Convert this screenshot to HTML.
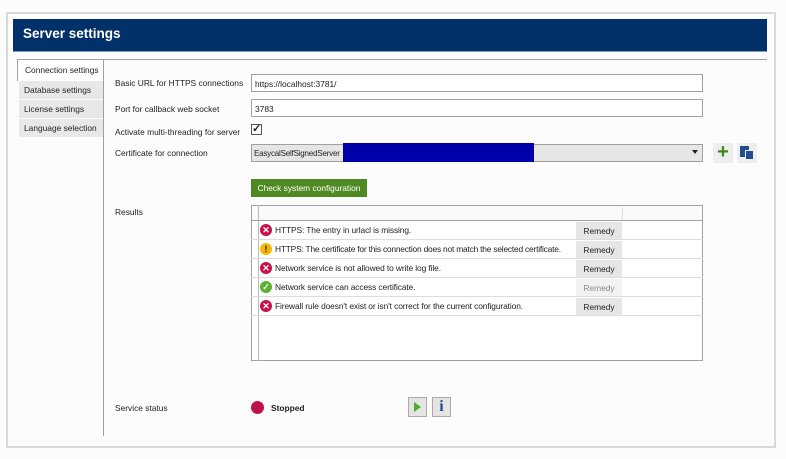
<!DOCTYPE html>
<html><head><style>
body{margin:0;width:786px;height:459px;background:#fcfcfc;font-family:"Liberation Sans",sans-serif;font-size:8.4px;color:#222;position:relative;overflow:hidden}
div,span{position:absolute;box-sizing:border-box;white-space:nowrap}
.frame{left:6px;top:12px;width:770px;height:436px;border:2px solid #d9d9d9;background:#fcfcfc}
.hdr{left:13px;top:19px;width:754px;height:33px;background:#023169;border-bottom:1px solid #7f98b8;color:#fff;font-size:13.5px;font-weight:bold;padding:7px 0 0 10px}
.tab{left:19px;width:84px;height:18px;background:#e8e8e8;padding:4px 0 0 5px}
.lbl{left:115px}
.inp{left:251px;width:452px;height:18px;border:1px solid #a0a0a0;background:#fff;padding:4px 0 0 3px}
.row{left:251px;width:452px;height:19px;border-bottom:1px solid #ddd}
.ic{left:9px;top:3px;width:12px;height:12px;border-radius:50%;color:#fff;font-size:9px;font-weight:bold;text-align:center;line-height:12px}
.rt{left:24px;top:4px;letter-spacing:-0.1px}
.rem{left:325px;top:1px;width:46px;height:17px;background:#e6e6e6;text-align:center;padding-top:4px}
</style></head><body>
<div class="frame"></div>
<div class="hdr">Server settings</div>
<div style="left:17px;top:59px;width:750px;height:1px;background:#a0a0a0"></div>
<div style="left:17px;top:60px;width:87px;height:21px;background:#fff;border:1px solid #a0a0a0;border-top:none;border-bottom:none;padding:5px 0 0 7px">Connection settings</div>
<div class="tab" style="top:81px">Database settings</div>
<div class="tab" style="top:100px">License settings</div>
<div class="tab" style="top:119px">Language selection</div>
<div style="left:103px;top:80px;width:1px;height:356px;background:#a0a0a0"></div>
<div class="lbl" style="top:78px">Basic URL for HTTPS connections</div>
<div class="inp" style="top:74px">https://localhost:3781/</div>
<div class="lbl" style="top:104px">Port for callback web socket</div>
<div class="inp" style="top:99px">3783</div>
<div class="lbl" style="top:127px">Activate multi-threading for server</div>
<div style="left:251px;top:124px;width:11px;height:11px;border:1px solid #555;background:#fff;font-size:11px;line-height:9px;text-align:center;font-weight:bold">✓</div>
<div class="lbl" style="top:148px">Certificate for connection</div>
<div class="inp" style="top:144px;height:18px;background:#e6e6e6;padding-top:4px;padding-left:2px;font-size:8px;letter-spacing:-0.2px">EasycalSelfSignedServer</div>
<div style="left:343px;top:143px;width:191px;height:19px;background:#0000a8"></div>
<div style="left:692px;top:150px;border:3px solid transparent;border-top:4px solid #222"></div>
<div style="left:713px;top:143px;width:20px;height:20px;background:#eee;color:#3a8a1a;font-size:20px;font-weight:bold;text-align:center;line-height:19px">+</div>
<div style="left:737px;top:143px;width:20px;height:20px;background:#eee"><span style="left:3px;top:3px;width:9px;height:11px;background:#1f4e8a"></span><span style="left:8px;top:7px;width:9px;height:10px;background:#1f4e8a;border:1px solid #eee"></span></div>
<div style="left:251px;top:179px;width:116px;height:18px;background:#4e8a21;color:#fff;text-align:center;padding-top:4px">Check system configuration</div>
<div class="lbl" style="top:207px">Results</div>
<div style="left:251px;top:205px;width:452px;height:156px;border:1px solid #a0a0a0;background:#fff"></div>
<div style="left:251px;top:205px;width:452px;height:16px;border:1px solid #a0a0a0;background:#fafafa"></div>
<div style="left:258px;top:205px;width:1px;height:156px;background:#bbb"></div>
<div style="left:622px;top:207px;width:1px;height:12px;background:#ddd"></div>
<div class="row" style="top:221px"><span class="ic" style="background:#c8114a">✕</span><span class="rt">HTTPS: The entry in urlacl is missing.</span><span class="rem">Remedy</span></div>
<div class="row" style="top:240px"><span class="ic" style="background:#f5b800;color:#222">!</span><span class="rt" style="letter-spacing:-0.2px">HTTPS: The certificate for this connection does not match the selected certificate.</span><span class="rem">Remedy</span></div>
<div class="row" style="top:259px"><span class="ic" style="background:#c8114a">✕</span><span class="rt">Network service is not allowed to write log file.</span><span class="rem">Remedy</span></div>
<div class="row" style="top:278px"><span class="ic" style="background:#5cb030">✓</span><span class="rt">Network service can access certificate.</span><span class="rem" style="background:#f2f2f2;color:#888">Remedy</span></div>
<div class="row" style="top:297px"><span class="ic" style="background:#c8114a">✕</span><span class="rt">Firewall rule doesn't exist or isn't correct for the current configuration.</span><span class="rem">Remedy</span></div>
<div class="lbl" style="top:403px">Service status</div>
<div style="left:251px;top:401px;width:13px;height:13px;border-radius:50%;background:#c0104a"></div>
<div style="left:271px;top:403px;font-weight:bold">Stopped</div>
<div style="left:408px;top:397px;width:19px;height:20px;background:#e4e4e4;border:1px solid #aaa"><span style="left:5px;top:4px;border:5px solid transparent;border-left:7px solid #4caf2a;border-right:none"></span></div>
<div style="left:432px;top:397px;width:19px;height:20px;background:#e4e4e4;border:1px solid #aaa;color:#1f4e8a;font-family:'Liberation Serif',serif;font-weight:bold;font-size:16px;text-align:center;line-height:18px">i</div>
</body></html>
